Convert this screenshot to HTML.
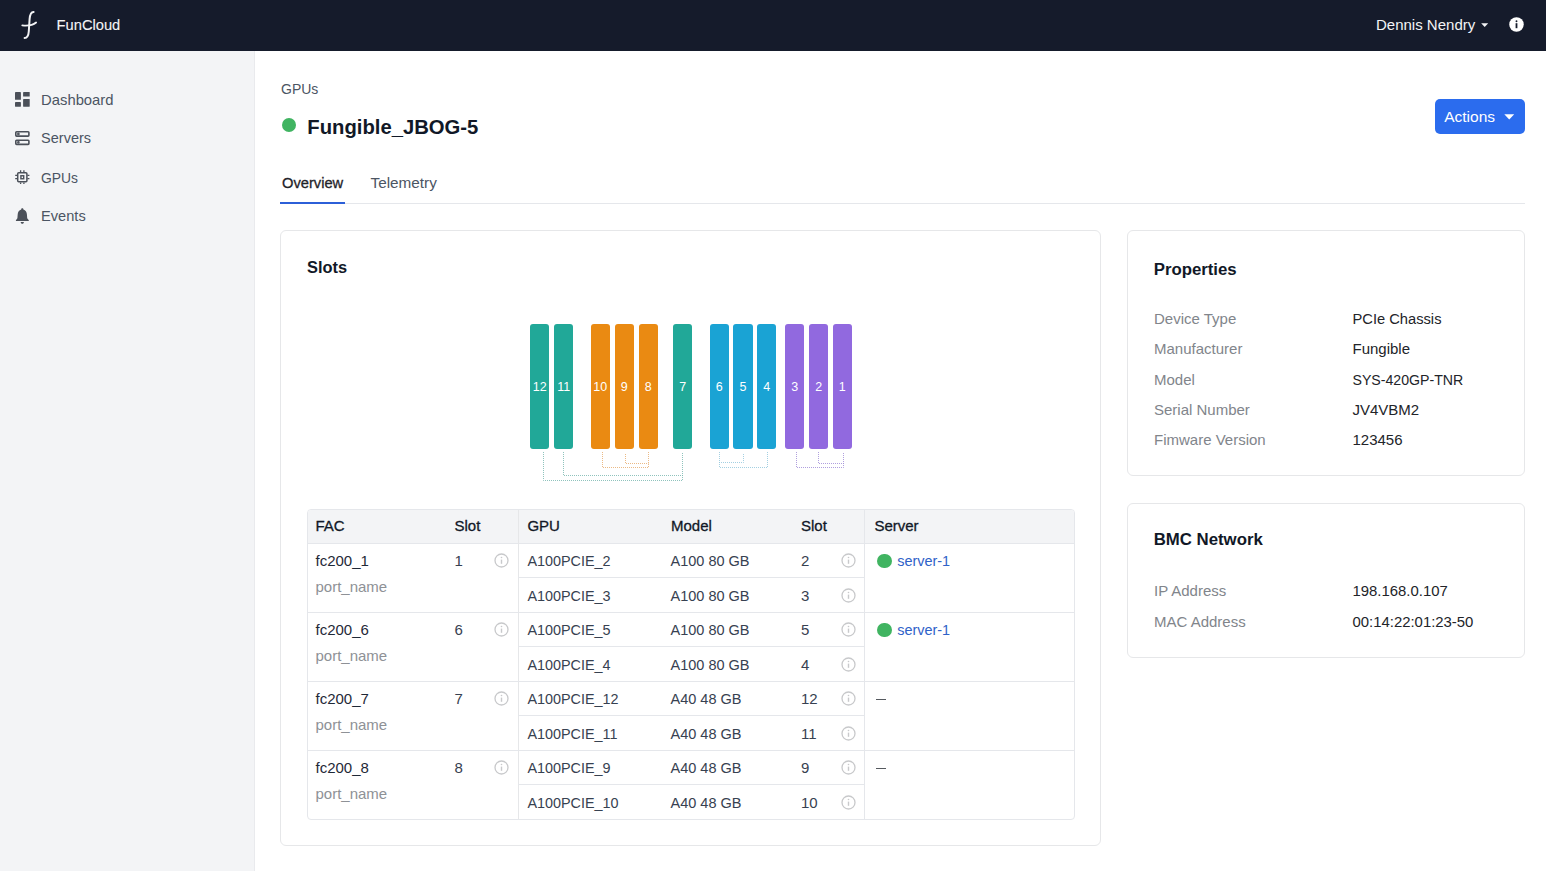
<!DOCTYPE html>
<html><head><meta charset="utf-8"><title>FunCloud - Fungible_JBOG-5</title>
<style>
html,body{margin:0;padding:0;}
body{width:1546px;height:871px;position:relative;overflow:hidden;background:#ffffff;font-family:"Liberation Sans",sans-serif;}
.t{position:absolute;white-space:nowrap;}
.bar{position:absolute;top:324px;width:19.3px;height:125px;border-radius:3px;color:#fff;font-size:12.5px;line-height:127px;text-align:center;}
</style></head><body>
<div style="position:absolute;left:0;top:0;width:1546px;height:51.3px;background:#151b2b;"></div>
<svg style="position:absolute;left:18px;top:8px" width="24" height="34" viewBox="0 0 24 34">
<path d="M15.6 3.9 C13.0 3.7 12.0 6.5 11.6 11 L10.8 23.2 C10.5 27.6 9.4 29.9 6.6 29.9" fill="none" stroke="#f2f3f5" stroke-width="2" stroke-linecap="round"/>
<path d="M4.3 17.4 C9 17.9 14.5 17.5 18.1 14.5" fill="none" stroke="#f2f3f5" stroke-width="1.85" stroke-linecap="round"/>
</svg>
<div class="t" style="left:56.6px;top:18px;font-size:14.7px;line-height:14.7px;color:#f3f4f6;font-weight:400;-webkit-text-stroke:0.1px #f3f4f6;">FunCloud</div>

<div class="t" style="left:1376px;top:17px;font-size:15px;line-height:15px;color:#f3f4f6;font-weight:400;">Dennis Nendry</div>

<svg style="position:absolute;left:1481px;top:22.5px" width="8" height="5" viewBox="0 0 8 5"><path d="M0.2 0.3 L7.2 0.3 L3.7 4 Z" fill="#f3f4f6"/></svg>
<svg style="position:absolute;left:1508.6px;top:17.1px" width="15" height="15" viewBox="0 0 15 15">
<circle cx="7.5" cy="7.5" r="7.25" fill="#ffffff"/>
<rect x="6.6" y="6.2" width="1.8" height="5.0" fill="#151b2b"/>
<circle cx="7.5" cy="4.3" r="0.95" fill="#151b2b"/>
</svg>
<div style="position:absolute;left:0;top:51.3px;width:253.5px;height:820px;background:#f3f4f6;border-right:1px solid #e9eaed;"></div>
<svg style="position:absolute;left:15px;top:92px" width="15" height="15" viewBox="0 0 15 15" fill="#4b5059">
<rect x="0" y="0" width="5.9" height="7.8" rx="0.4"/><rect x="0" y="10.1" width="5.9" height="4.6" rx="0.4"/>
<rect x="8.1" y="0" width="6.6" height="4.6" rx="0.4"/><rect x="8.1" y="7.1" width="6.6" height="7.6" rx="0.4"/>
</svg>
<div class="t" style="left:41.1px;top:93px;font-size:14.8px;line-height:14.8px;color:#4b5563;font-weight:400;">Dashboard</div>

<svg style="position:absolute;left:15px;top:131px" width="15" height="15" viewBox="0 0 15 15" fill="none" stroke="#4b5059" stroke-width="1.6">
<rect x="0.8" y="0.8" width="13.1" height="4.3" rx="0.8"/><rect x="0.8" y="9.2" width="13.1" height="4.2" rx="0.8"/>
<circle cx="3.4" cy="2.95" r="0.55" fill="#4b5059"/><circle cx="3.4" cy="11.3" r="0.55" fill="#4b5059"/>
</svg>
<div class="t" style="left:41.1px;top:131px;font-size:14.5px;line-height:14.5px;color:#4b5563;font-weight:400;">Servers</div>

<svg style="position:absolute;left:15px;top:170px" width="15" height="15" viewBox="0 0 15 15" fill="none" stroke="#4b5059">
<rect x="2.7" y="2.65" width="9.2" height="9" rx="1" stroke-width="1.5"/>
<rect x="5.9" y="5.75" width="2.8" height="3" stroke-width="1.4"/>
<path d="M5.6 0.3 V2.2 M8.9 0.3 V2.2 M5.6 12.4 V14 M8.9 12.4 V14 M0.2 5.4 H2.2 M0.2 8.6 H2.2 M12.4 5.4 H14.4 M12.4 8.6 H14.4" stroke-width="1.3"/>
</svg>
<div class="t" style="left:41.1px;top:172px;font-size:13.9px;line-height:13.9px;color:#4b5563;font-weight:400;letter-spacing:-0.1px;">GPUs</div>

<svg style="position:absolute;left:15px;top:208px" width="15" height="17" viewBox="0 0 15 17" fill="#4b5059">
<path d="M7.3 0.3 C8.0 0.3 8.4 0.8 8.4 1.4 C10.5 2.0 11.8 3.8 11.9 6.3 L12.2 10.3 L13.8 12.2 V13 H0.9 V12.2 L2.4 10.3 L2.7 6.3 C2.8 3.8 4.1 2.0 6.2 1.4 C6.2 0.8 6.6 0.3 7.3 0.3 Z"/>
<path d="M5.7 13.9 H8.9 C8.9 15.0 8.2 15.8 7.3 15.8 C6.4 15.8 5.7 15.0 5.7 13.9 Z"/>
</svg>
<div class="t" style="left:41.1px;top:209px;font-size:14.6px;line-height:14.6px;color:#4b5563;font-weight:400;">Events</div>

<div class="t" style="left:281px;top:82px;font-size:14px;line-height:14px;color:#4b5563;font-weight:400;">GPUs</div>

<div style="position:absolute;left:282px;top:118.3px;width:14px;height:14px;border-radius:50%;background:#40b461;"></div>
<div class="t" style="left:307.3px;top:117px;font-size:20.25px;line-height:20.25px;color:#111827;font-weight:700;">Fungible_JBOG-5</div>

<div class="t" style="left:282px;top:176px;font-size:14.7px;line-height:14.7px;color:#1f2329;font-weight:400;-webkit-text-stroke:0.3px #1f2329;">Overview</div>

<div class="t" style="left:370.5px;top:175px;font-size:15.3px;line-height:15.3px;color:#4b5563;font-weight:400;">Telemetry</div>

<div style="position:absolute;left:280px;top:203px;width:1245px;height:1px;background:#e5e7eb;"></div>
<div style="position:absolute;left:280px;top:202px;width:65px;height:2.2px;background:#2c5fd8;"></div>
<div style="position:absolute;left:1435px;top:99px;width:90px;height:35px;border-radius:5px;background:#2b6cee;"></div>
<div class="t" style="left:1444.2px;top:109px;font-size:15.5px;line-height:15.5px;color:#ffffff;font-weight:400;">Actions</div>

<svg style="position:absolute;left:1503.5px;top:113.5px" width="11" height="6" viewBox="0 0 11 6"><path d="M0.3 0.3 H10.2 L5.25 5.6 Z" fill="#ffffff"/></svg>
<div style="position:absolute;background:#fff;border:1px solid #e6e7e9;border-radius:6px;box-sizing:border-box;left:280px;top:230px;width:821px;height:616px;"></div>
<div style="position:absolute;background:#fff;border:1px solid #e6e7e9;border-radius:6px;box-sizing:border-box;left:1127px;top:230px;width:398px;height:246px;"></div>
<div style="position:absolute;background:#fff;border:1px solid #e6e7e9;border-radius:6px;box-sizing:border-box;left:1127px;top:503px;width:398px;height:155px;"></div>
<div class="t" style="left:307px;top:259px;font-size:16.4px;line-height:16.4px;color:#111827;font-weight:700;">Slots</div>

<div class="bar" style="left:530px;background:#21a898;">12</div>
<div class="bar" style="left:554px;background:#21a898;">11</div>
<div class="bar" style="left:590.5px;background:#ea8a12;">10</div>
<div class="bar" style="left:614.5px;background:#ea8a12;">9</div>
<div class="bar" style="left:638.5px;background:#ea8a12;">8</div>
<div class="bar" style="left:673px;background:#21a898;">7</div>
<div class="bar" style="left:709.5px;background:#1aa3d4;">6</div>
<div class="bar" style="left:733.3px;background:#1aa3d4;">5</div>
<div class="bar" style="left:757px;background:#1aa3d4;">4</div>
<div class="bar" style="left:785px;background:#9169df;">3</div>
<div class="bar" style="left:809px;background:#9169df;">2</div>
<div class="bar" style="left:832.5px;background:#9169df;">1</div>
<svg style="position:absolute;left:0;top:0" width="1546" height="871"><path d="M543.5,452 L543.5,480.5 L682.5,480.5 L682.5,452" fill="none" stroke="#5faaa1" stroke-width="1" stroke-dasharray="1 1" opacity="0.7"/><path d="M563.5,452 L563.5,475.5 L682.5,475.5" fill="none" stroke="#5faaa1" stroke-width="1" stroke-dasharray="1 1" opacity="0.7"/><path d="M602.5,452 L602.5,467.5 L648.5,467.5 L648.5,452" fill="none" stroke="#e39c52" stroke-width="1" stroke-dasharray="1 1" opacity="0.7"/><path d="M625.5,454 L625.5,463.5 L648.5,463.5" fill="none" stroke="#e39c52" stroke-width="1" stroke-dasharray="1 1" opacity="0.7"/><path d="M719.5,452 L719.5,467.5 L767.5,467.5 L767.5,452" fill="none" stroke="#7dbcd6" stroke-width="1" stroke-dasharray="1 1" opacity="0.7"/><path d="M743.5,454 L743.5,462.5 L719.5,462.5" fill="none" stroke="#7dbcd6" stroke-width="1" stroke-dasharray="1 1" opacity="0.7"/><path d="M796.5,452 L796.5,467.5 L843.5,467.5 L843.5,452" fill="none" stroke="#8f78d0" stroke-width="1" stroke-dasharray="1 1" opacity="0.7"/><path d="M818.5,452 L818.5,463.5 L843.5,463.5" fill="none" stroke="#8f78d0" stroke-width="1" stroke-dasharray="1 1" opacity="0.7"/></svg>
<div style="position:absolute;left:307px;top:509px;width:768px;height:311px;border:1px solid #e5e7eb;border-radius:4px;box-sizing:border-box;overflow:hidden;"><div style="position:absolute;left:0;top:0;width:100%;height:33px;background:#f3f4f6;border-bottom:1px solid #e5e7eb;"></div></div>
<div style="position:absolute;left:517.6px;top:510px;width:1px;height:309px;background:#e6e7e9;"></div>
<div style="position:absolute;left:864px;top:510px;width:1px;height:309px;background:#e5e7eb;"></div>
<div class="t" style="left:315.5px;top:518px;font-size:15px;line-height:15px;color:#111827;font-weight:400;-webkit-text-stroke:0.3px #111827;">FAC</div>

<div class="t" style="left:454.5px;top:518px;font-size:15px;line-height:15px;color:#111827;font-weight:400;-webkit-text-stroke:0.3px #111827;">Slot</div>

<div class="t" style="left:527.4px;top:518px;font-size:15px;line-height:15px;color:#111827;font-weight:400;-webkit-text-stroke:0.3px #111827;">GPU</div>

<div class="t" style="left:671px;top:518px;font-size:15px;line-height:15px;color:#111827;font-weight:400;-webkit-text-stroke:0.3px #111827;">Model</div>

<div class="t" style="left:801px;top:518px;font-size:15px;line-height:15px;color:#111827;font-weight:400;-webkit-text-stroke:0.3px #111827;">Slot</div>

<div class="t" style="left:874.4px;top:518px;font-size:15px;line-height:15px;color:#111827;font-weight:400;-webkit-text-stroke:0.3px #111827;">Server</div>

<div style="position:absolute;left:518px;top:577px;width:346px;height:1px;background:#e5e7eb;"></div>
<div class="t" style="left:315.5px;top:553px;font-size:15px;line-height:15px;color:#1f2937;font-weight:400;">fc200_1</div>

<div class="t" style="left:315.5px;top:579px;font-size:15px;line-height:15px;color:#8e9196;font-weight:400;">port_name</div>

<div class="t" style="left:454.5px;top:553px;font-size:15px;line-height:15px;color:#374151;font-weight:400;">1</div>

<svg style="position:absolute;left:493.5px;top:553.0px" width="15" height="15" viewBox="0 0 15 15"><circle cx="7.5" cy="7.5" r="6.5" fill="none" stroke="#c8c9cb" stroke-width="1.3"/><rect x="6.8" y="6.6" width="1.4" height="4.2" fill="#c8c9cb"/><circle cx="7.5" cy="4.5" r="0.8" fill="#c8c9cb"/></svg>
<div class="t" style="left:527.4px;top:554px;font-size:14.4px;line-height:14.4px;color:#374151;font-weight:400;">A100PCIE_2</div>

<div class="t" style="left:670.5px;top:554px;font-size:14.5px;line-height:14.5px;color:#374151;font-weight:400;">A100 80 GB</div>

<div class="t" style="left:801px;top:553px;font-size:15px;line-height:15px;color:#374151;font-weight:400;">2</div>

<svg style="position:absolute;left:840.5px;top:553.0px" width="15" height="15" viewBox="0 0 15 15"><circle cx="7.5" cy="7.5" r="6.5" fill="none" stroke="#c8c9cb" stroke-width="1.3"/><rect x="6.8" y="6.6" width="1.4" height="4.2" fill="#c8c9cb"/><circle cx="7.5" cy="4.5" r="0.8" fill="#c8c9cb"/></svg>
<div class="t" style="left:527.4px;top:589px;font-size:14.4px;line-height:14.4px;color:#374151;font-weight:400;">A100PCIE_3</div>

<div class="t" style="left:670.5px;top:589px;font-size:14.5px;line-height:14.5px;color:#374151;font-weight:400;">A100 80 GB</div>

<div class="t" style="left:801px;top:588px;font-size:15px;line-height:15px;color:#374151;font-weight:400;">3</div>

<svg style="position:absolute;left:840.5px;top:587.5px" width="15" height="15" viewBox="0 0 15 15"><circle cx="7.5" cy="7.5" r="6.5" fill="none" stroke="#c8c9cb" stroke-width="1.3"/><rect x="6.8" y="6.6" width="1.4" height="4.2" fill="#c8c9cb"/><circle cx="7.5" cy="4.5" r="0.8" fill="#c8c9cb"/></svg>
<div style="position:absolute;left:877px;top:553.6px;width:14.5px;height:14.5px;border-radius:50%;background:#40b461;"></div>
<div class="t" style="left:897.2px;top:554px;font-size:14.45px;line-height:14.45px;color:#2f62c8;font-weight:400;">server-1</div>

<div style="position:absolute;left:308px;top:611.5px;width:766px;height:1px;background:#e5e7eb;"></div>
<div style="position:absolute;left:518px;top:646px;width:346px;height:1px;background:#e5e7eb;"></div>
<div class="t" style="left:315.5px;top:622px;font-size:15px;line-height:15px;color:#1f2937;font-weight:400;">fc200_6</div>

<div class="t" style="left:315.5px;top:648px;font-size:15px;line-height:15px;color:#8e9196;font-weight:400;">port_name</div>

<div class="t" style="left:454.5px;top:622px;font-size:15px;line-height:15px;color:#374151;font-weight:400;">6</div>

<svg style="position:absolute;left:493.5px;top:622.0px" width="15" height="15" viewBox="0 0 15 15"><circle cx="7.5" cy="7.5" r="6.5" fill="none" stroke="#c8c9cb" stroke-width="1.3"/><rect x="6.8" y="6.6" width="1.4" height="4.2" fill="#c8c9cb"/><circle cx="7.5" cy="4.5" r="0.8" fill="#c8c9cb"/></svg>
<div class="t" style="left:527.4px;top:623px;font-size:14.4px;line-height:14.4px;color:#374151;font-weight:400;">A100PCIE_5</div>

<div class="t" style="left:670.5px;top:623px;font-size:14.5px;line-height:14.5px;color:#374151;font-weight:400;">A100 80 GB</div>

<div class="t" style="left:801px;top:622px;font-size:15px;line-height:15px;color:#374151;font-weight:400;">5</div>

<svg style="position:absolute;left:840.5px;top:622.0px" width="15" height="15" viewBox="0 0 15 15"><circle cx="7.5" cy="7.5" r="6.5" fill="none" stroke="#c8c9cb" stroke-width="1.3"/><rect x="6.8" y="6.6" width="1.4" height="4.2" fill="#c8c9cb"/><circle cx="7.5" cy="4.5" r="0.8" fill="#c8c9cb"/></svg>
<div class="t" style="left:527.4px;top:658px;font-size:14.4px;line-height:14.4px;color:#374151;font-weight:400;">A100PCIE_4</div>

<div class="t" style="left:670.5px;top:658px;font-size:14.5px;line-height:14.5px;color:#374151;font-weight:400;">A100 80 GB</div>

<div class="t" style="left:801px;top:657px;font-size:15px;line-height:15px;color:#374151;font-weight:400;">4</div>

<svg style="position:absolute;left:840.5px;top:656.5px" width="15" height="15" viewBox="0 0 15 15"><circle cx="7.5" cy="7.5" r="6.5" fill="none" stroke="#c8c9cb" stroke-width="1.3"/><rect x="6.8" y="6.6" width="1.4" height="4.2" fill="#c8c9cb"/><circle cx="7.5" cy="4.5" r="0.8" fill="#c8c9cb"/></svg>
<div style="position:absolute;left:877px;top:622.6px;width:14.5px;height:14.5px;border-radius:50%;background:#40b461;"></div>
<div class="t" style="left:897.2px;top:623px;font-size:14.45px;line-height:14.45px;color:#2f62c8;font-weight:400;">server-1</div>

<div style="position:absolute;left:308px;top:680.5px;width:766px;height:1px;background:#e5e7eb;"></div>
<div style="position:absolute;left:518px;top:715px;width:346px;height:1px;background:#e5e7eb;"></div>
<div class="t" style="left:315.5px;top:691px;font-size:15px;line-height:15px;color:#1f2937;font-weight:400;">fc200_7</div>

<div class="t" style="left:315.5px;top:717px;font-size:15px;line-height:15px;color:#8e9196;font-weight:400;">port_name</div>

<div class="t" style="left:454.5px;top:691px;font-size:15px;line-height:15px;color:#374151;font-weight:400;">7</div>

<svg style="position:absolute;left:493.5px;top:691.0px" width="15" height="15" viewBox="0 0 15 15"><circle cx="7.5" cy="7.5" r="6.5" fill="none" stroke="#c8c9cb" stroke-width="1.3"/><rect x="6.8" y="6.6" width="1.4" height="4.2" fill="#c8c9cb"/><circle cx="7.5" cy="4.5" r="0.8" fill="#c8c9cb"/></svg>
<div class="t" style="left:527.4px;top:692px;font-size:14.4px;line-height:14.4px;color:#374151;font-weight:400;">A100PCIE_12</div>

<div class="t" style="left:670.5px;top:692px;font-size:14.5px;line-height:14.5px;color:#374151;font-weight:400;">A40 48 GB</div>

<div class="t" style="left:801px;top:691px;font-size:15px;line-height:15px;color:#374151;font-weight:400;">12</div>

<svg style="position:absolute;left:840.5px;top:691.0px" width="15" height="15" viewBox="0 0 15 15"><circle cx="7.5" cy="7.5" r="6.5" fill="none" stroke="#c8c9cb" stroke-width="1.3"/><rect x="6.8" y="6.6" width="1.4" height="4.2" fill="#c8c9cb"/><circle cx="7.5" cy="4.5" r="0.8" fill="#c8c9cb"/></svg>
<div class="t" style="left:527.4px;top:727px;font-size:14.4px;line-height:14.4px;color:#374151;font-weight:400;">A100PCIE_11</div>

<div class="t" style="left:670.5px;top:727px;font-size:14.5px;line-height:14.5px;color:#374151;font-weight:400;">A40 48 GB</div>

<div class="t" style="left:801px;top:726px;font-size:15px;line-height:15px;color:#374151;font-weight:400;">11</div>

<svg style="position:absolute;left:840.5px;top:725.5px" width="15" height="15" viewBox="0 0 15 15"><circle cx="7.5" cy="7.5" r="6.5" fill="none" stroke="#c8c9cb" stroke-width="1.3"/><rect x="6.8" y="6.6" width="1.4" height="4.2" fill="#c8c9cb"/><circle cx="7.5" cy="4.5" r="0.8" fill="#c8c9cb"/></svg>
<div style="position:absolute;left:876px;top:698.6px;width:10px;height:1.4px;background:#55595f;"></div>
<div style="position:absolute;left:308px;top:749.5px;width:766px;height:1px;background:#e5e7eb;"></div>
<div style="position:absolute;left:518px;top:784px;width:346px;height:1px;background:#e5e7eb;"></div>
<div class="t" style="left:315.5px;top:760px;font-size:15px;line-height:15px;color:#1f2937;font-weight:400;">fc200_8</div>

<div class="t" style="left:315.5px;top:786px;font-size:15px;line-height:15px;color:#8e9196;font-weight:400;">port_name</div>

<div class="t" style="left:454.5px;top:760px;font-size:15px;line-height:15px;color:#374151;font-weight:400;">8</div>

<svg style="position:absolute;left:493.5px;top:760.0px" width="15" height="15" viewBox="0 0 15 15"><circle cx="7.5" cy="7.5" r="6.5" fill="none" stroke="#c8c9cb" stroke-width="1.3"/><rect x="6.8" y="6.6" width="1.4" height="4.2" fill="#c8c9cb"/><circle cx="7.5" cy="4.5" r="0.8" fill="#c8c9cb"/></svg>
<div class="t" style="left:527.4px;top:761px;font-size:14.4px;line-height:14.4px;color:#374151;font-weight:400;">A100PCIE_9</div>

<div class="t" style="left:670.5px;top:761px;font-size:14.5px;line-height:14.5px;color:#374151;font-weight:400;">A40 48 GB</div>

<div class="t" style="left:801px;top:760px;font-size:15px;line-height:15px;color:#374151;font-weight:400;">9</div>

<svg style="position:absolute;left:840.5px;top:760.0px" width="15" height="15" viewBox="0 0 15 15"><circle cx="7.5" cy="7.5" r="6.5" fill="none" stroke="#c8c9cb" stroke-width="1.3"/><rect x="6.8" y="6.6" width="1.4" height="4.2" fill="#c8c9cb"/><circle cx="7.5" cy="4.5" r="0.8" fill="#c8c9cb"/></svg>
<div class="t" style="left:527.4px;top:796px;font-size:14.4px;line-height:14.4px;color:#374151;font-weight:400;">A100PCIE_10</div>

<div class="t" style="left:670.5px;top:796px;font-size:14.5px;line-height:14.5px;color:#374151;font-weight:400;">A40 48 GB</div>

<div class="t" style="left:801px;top:795px;font-size:15px;line-height:15px;color:#374151;font-weight:400;">10</div>

<svg style="position:absolute;left:840.5px;top:794.5px" width="15" height="15" viewBox="0 0 15 15"><circle cx="7.5" cy="7.5" r="6.5" fill="none" stroke="#c8c9cb" stroke-width="1.3"/><rect x="6.8" y="6.6" width="1.4" height="4.2" fill="#c8c9cb"/><circle cx="7.5" cy="4.5" r="0.8" fill="#c8c9cb"/></svg>
<div style="position:absolute;left:876px;top:767.6px;width:10px;height:1.4px;background:#55595f;"></div>
<div class="t" style="left:1153.7px;top:262px;font-size:16.8px;line-height:16.8px;color:#111827;font-weight:700;">Properties</div>

<div class="t" style="left:1154px;top:311px;font-size:15px;line-height:15px;color:#81858b;font-weight:400;">Device Type</div>

<div class="t" style="left:1352.5px;top:312px;font-size:14.7px;line-height:14.7px;color:#222429;font-weight:400;">PCIe Chassis</div>

<div class="t" style="left:1154px;top:341px;font-size:15px;line-height:15px;color:#81858b;font-weight:400;">Manufacturer</div>

<div class="t" style="left:1352.5px;top:341px;font-size:15px;line-height:15px;color:#222429;font-weight:400;">Fungible</div>

<div class="t" style="left:1154px;top:372px;font-size:15px;line-height:15px;color:#81858b;font-weight:400;">Model</div>

<div class="t" style="left:1352.5px;top:373px;font-size:14.15px;line-height:14.15px;color:#222429;font-weight:400;">SYS-420GP-TNR</div>

<div class="t" style="left:1154px;top:402px;font-size:15px;line-height:15px;color:#81858b;font-weight:400;">Serial Number</div>

<div class="t" style="left:1352.5px;top:402px;font-size:15px;line-height:15px;color:#222429;font-weight:400;">JV4VBM2</div>

<div class="t" style="left:1154px;top:432px;font-size:15px;line-height:15px;color:#81858b;font-weight:400;">Fimware Version</div>

<div class="t" style="left:1352.5px;top:432px;font-size:15px;line-height:15px;color:#222429;font-weight:400;">123456</div>

<div class="t" style="left:1153.7px;top:532px;font-size:16.8px;line-height:16.8px;color:#111827;font-weight:700;">BMC Network</div>

<div class="t" style="left:1154px;top:583px;font-size:15px;line-height:15px;color:#81858b;font-weight:400;">IP Address</div>

<div class="t" style="left:1352.5px;top:584px;font-size:14.9px;line-height:14.9px;color:#222429;font-weight:400;">198.168.0.107</div>

<div class="t" style="left:1154px;top:614px;font-size:15px;line-height:15px;color:#81858b;font-weight:400;">MAC Address</div>

<div class="t" style="left:1352.5px;top:615px;font-size:14.9px;line-height:14.9px;color:#222429;font-weight:400;">00:14:22:01:23-50</div>

</body></html>
